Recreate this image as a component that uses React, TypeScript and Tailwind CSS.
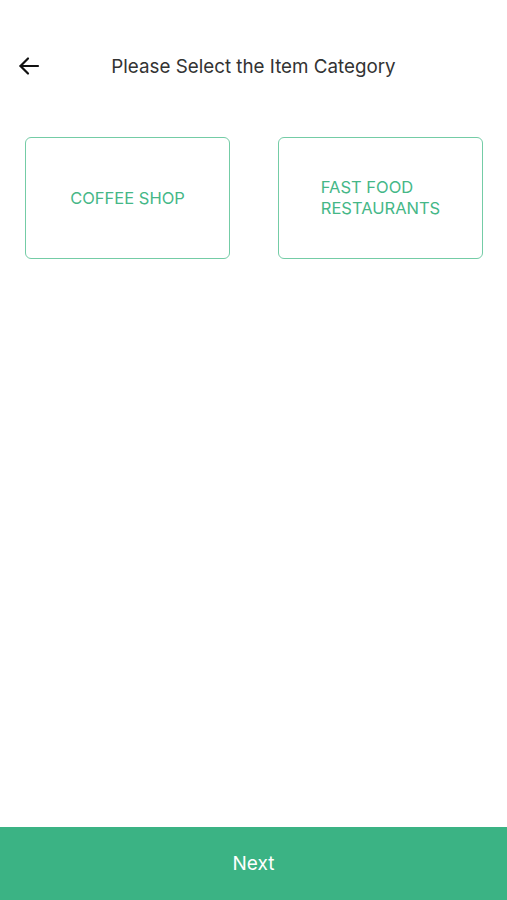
import React from "react";

export default function App() {
  return (
    <div className="flex h-[900px] w-full flex-col bg-white" style={{ fontFamily: "Inter, 'Liberation Sans', sans-serif" }}>
      <div className="grid h-[44px] grid-cols-[1fr_auto_1fr] items-center mt-[45px] px-[17px]">
        <div className="flex items-center">
          <svg width="24" height="24" viewBox="0 0 24 24" fill="none" stroke="#111" strokeWidth="2.2" strokeLinecap="round" strokeLinejoin="round" className="-mt-[2px]">
            <path d="M21 12H3.5" />
            <path d="M11 4.5L3.5 12L11 19.5" />
          </svg>
        </div>
        <div className="text-[18.8px] text-[#333]">Please Select the Item Category</div>
        <div />
      </div>
      <div className="mt-[48px] grid grid-cols-2 gap-[48px] pl-[25px] pr-[24px]">
        <button className="flex h-[122px] items-center justify-center rounded-[6px] border-[1.6px] border-[#74cca6] text-[16.5px] text-[#45b787]">
          COFFEE SHOP
        </button>
        <button className="flex h-[122px] items-center justify-center rounded-[6px] border-[1.6px] border-[#74cca6] text-[16.5px] text-[#45b787]">
          <span className="text-left leading-[21px]">FAST FOOD<br />RESTAURANTS</span>
        </button>
      </div>
      <div className="flex-1" />
      <button className="flex h-[73px] w-full items-center justify-center bg-[#3bb384] pt-[2px] text-[19px] text-white">
        Next
      </button>
    </div>
  );
}
